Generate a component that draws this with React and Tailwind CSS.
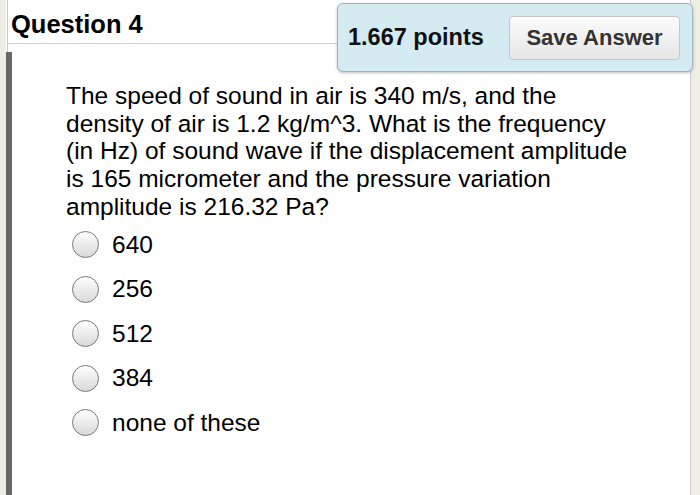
import React from "react";

const options = ["640", "256", "512", "384", "none of these"];

const questionLines = [
  "The speed of sound in air is 340 m/s, and the",
  "density of air is 1.2 kg/m^3. What is the frequency",
  "(in Hz) of sound wave if the displacement amplitude",
  "is 165 micrometer and the pressure variation",
  "amplitude is 216.32 Pa?",
];

const Radio = () => (
  <span className="block h-[27px] w-[27px] shrink-0 rounded-full border-[1.5px] border-[#777] bg-gradient-to-b from-white to-[#d9d9d9]" />
);

export default function App() {
  return (
    <div
      className="flex h-[495px] w-[700px] overflow-hidden bg-[#eeede6] text-black"
      style={{ fontFamily: '"Liberation Sans", Arial, sans-serif' }}
    >
      <div className="w-[6px] shrink-0" />
      <div className="relative flex w-[685px] flex-col bg-white border-r border-[#cdcdcd]">
        {/* header */}
        <div className="ml-[1px] h-[52px] border-l border-[#cbcbcb]">
          <div className="h-[44px] border-b border-[#cfcfcf] pl-[3px] pt-[10px]">
            <h1 className="text-[25.5px] font-bold leading-[28px]">Question 4</h1>
          </div>
        </div>

        <div className="absolute left-[331px] top-[3px] flex h-[69px] w-[356px] items-center rounded-[6px] border border-[#9fb4bb] bg-[#d4ebf1] pl-[10px] shadow-[0_1px_3px_rgba(0,0,0,0.25)]">
          <span className="text-[23.5px] font-bold leading-none text-[#111]">1.667 points</span>
          <button className="ml-auto mr-[12px] h-[44px] w-[171px] rounded-[4px] border border-[#c6c6c6] bg-gradient-to-b from-[#fbfbfb] to-[#e6e6e6] text-[22px] font-bold text-[#333]">
            Save Answer
          </button>
        </div>

        {/* body */}
        <div className="flex-1 border-l-[6px] border-[#686868] pl-[54px] pt-[30px]">
          <p className="whitespace-nowrap text-[24.5px] leading-[27.7px]">
            {questionLines.map((l, i) => (
              <React.Fragment key={i}>
                {l}
                {i < questionLines.length - 1 && <br />}
              </React.Fragment>
            ))}
          </p>
          <div className="mt-[2px] flex flex-col">
            {options.map((o) => (
              <label key={o} className="flex h-[44.5px] items-center pl-[6px]">
                <Radio />
                <span className="ml-[13px] text-[24.5px] leading-none">{o}</span>
              </label>
            ))}
          </div>
        </div>
      </div>
    </div>
  );
}
